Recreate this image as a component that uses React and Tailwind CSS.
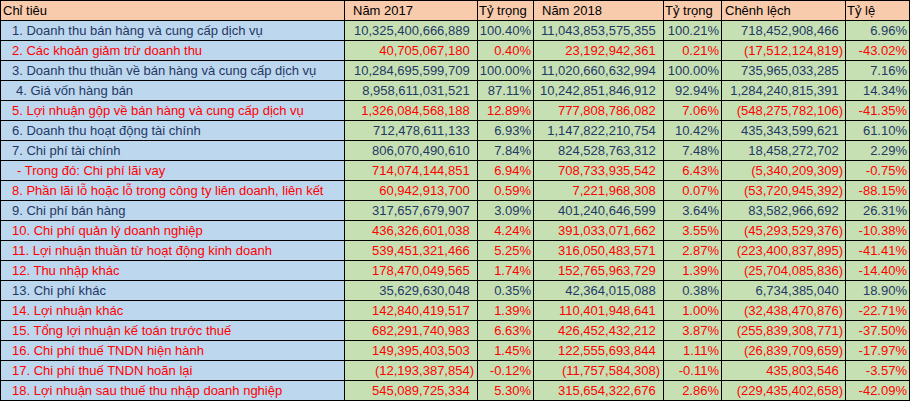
const rows = [
  { label: "1. Doanh thu bán hàng và cung cấp dịch vụ", indent: "pl-[11px]", red: false, v: ["10,325,400,666,889", "100.40%", "11,043,853,575,355", "100.21%", "718,452,908,466", "6.96%"] },
  { label: "2. Các khoản giảm trừ doanh thu", indent: "pl-[11px]", red: true, v: ["40,705,067,180", "0.40%", "23,192,942,361", "0.21%", "(17,512,124,819)", "-43.02%"] },
  { label: "3. Doanh thu thuần về bán hàng và cung cấp dịch vụ", indent: "pl-[11px]", red: false, v: ["10,284,695,599,709", "100.00%", "11,020,660,632,994", "100.00%", "735,965,033,285", "7.16%"] },
  { label: "4. Giá vốn hàng bán", indent: "pl-[15px]", red: false, v: ["8,958,611,031,521", "87.11%", "10,242,851,846,912", "92.94%", "1,284,240,815,391", "14.34%"] },
  { label: "5. Lợi nhuận gộp về bán hàng và cung cấp dịch vụ", indent: "pl-[11px]", red: true, v: ["1,326,084,568,188", "12.89%", "777,808,786,082", "7.06%", "(548,275,782,106)", "-41.35%"] },
  { label: "6. Doanh thu hoạt động tài chính", indent: "pl-[11px]", red: false, v: ["712,478,611,133", "6.93%", "1,147,822,210,754", "10.42%", "435,343,599,621", "61.10%"] },
  { label: "7. Chi phí tài chính", indent: "pl-[11px]", red: false, v: ["806,070,490,610", "7.84%", "824,528,763,312", "7.48%", "18,458,272,702", "2.29%"] },
  { label: "- Trong đó: Chi phí lãi vay", indent: "pl-[16px]", red: true, v: ["714,074,144,851", "6.94%", "708,733,935,542", "6.43%", "(5,340,209,309)", "-0.75%"] },
  { label: "8. Phần lãi lỗ hoặc lỗ trong công ty liên doanh, liên kết", indent: "pl-[11px]", red: true, v: ["60,942,913,700", "0.59%", "7,221,968,308", "0.07%", "(53,720,945,392)", "-88.15%"] },
  { label: "9. Chi phí bán hàng", indent: "pl-[11px]", red: false, v: ["317,657,679,907", "3.09%", "401,240,646,599", "3.64%", "83,582,966,692", "26.31%"] },
  { label: "10. Chi phí quản lý doanh nghiệp", indent: "pl-[11px]", red: true, v: ["436,326,601,038", "4.24%", "391,033,071,662", "3.55%", "(45,293,529,376)", "-10.38%"] },
  { label: "11. Lợi nhuận thuần từ hoạt động kinh doanh", indent: "pl-[11px]", red: true, v: ["539,451,321,466", "5.25%", "316,050,483,571", "2.87%", "(223,400,837,895)", "-41.41%"] },
  { label: "12. Thu nhập khác", indent: "pl-[11px]", red: true, v: ["178,470,049,565", "1.74%", "152,765,963,729", "1.39%", "(25,704,085,836)", "-14.40%"] },
  { label: "13. Chi phí khác", indent: "pl-[11px]", red: false, v: ["35,629,630,048", "0.35%", "42,364,015,088", "0.38%", "6,734,385,040", "18.90%"] },
  { label: "14. Lợi nhuận khác", indent: "pl-[11px]", red: true, v: ["142,840,419,517", "1.39%", "110,401,948,641", "1.00%", "(32,438,470,876)", "-22.71%"] },
  { label: "15. Tổng lợi nhuận kế toán trước thuế", indent: "pl-[11px]", red: true, v: ["682,291,740,983", "6.63%", "426,452,432,212", "3.87%", "(255,839,308,771)", "-37.50%"] },
  { label: "16. Chi phí thuế TNDN hiện hành", indent: "pl-[11px]", red: true, v: ["149,395,403,503", "1.45%", "122,555,693,844", "1.11%", "(26,839,709,659)", "-17.97%"] },
  { label: "17. Chi phí thuế TNDN hoãn lại", indent: "pl-[11px]", red: true, v: ["(12,193,387,854)", "-0.12%", "(11,757,584,308)", "-0.11%", "435,803,546", "-3.57%"] },
  { label: "18. Lợi nhuận sau thuế thu nhập doanh nghiệp", indent: "pl-[11px]", red: true, v: ["545,089,725,334", "5.30%", "315,654,322,676", "2.86%", "(229,435,402,658)", "-42.09%"] },
];

// accounting style: positives leave room for the closing paren
const Amount = ({ value }) => {
  const neg = value.startsWith("(");
  return (
    <>
      {value}
      {!neg && <span className="invisible">)</span>}
    </>
  );
};

export default function App() {
  return (
    <div className="w-[910px] h-[402px] bg-white font-['Liberation_Sans',Arial,sans-serif] text-[13px] leading-[19px]">
      <div className="grid grid-cols-[343px_132px_55px_129px_57px_123px_63px] auto-rows-[19px] gap-px p-px bg-black w-[910px]">
        <div className="bg-[#f8cbad] text-black pl-[2px] whitespace-nowrap">Chỉ tiêu</div>
        <div className="bg-[#f8cbad] text-black pl-[8px] whitespace-nowrap">Năm 2017</div>
        <div className="bg-[#f8cbad] text-black pl-px whitespace-nowrap">Tỷ trọng</div>
        <div className="bg-[#f8cbad] text-black pl-[8px] whitespace-nowrap">Năm 2018</div>
        <div className="bg-[#f8cbad] text-black pl-px whitespace-nowrap">Tỷ trọng</div>
        <div className="bg-[#f8cbad] text-black pl-[3px] whitespace-nowrap">Chênh lệch</div>
        <div className="bg-[#f8cbad] text-black pl-px whitespace-nowrap">Tỷ lệ</div>

        {rows.map((r, i) => {
          const color = r.red ? "text-[#ff0000]" : "text-[#1f3864]";
          return [
            <div key={i + "l"} className={`bg-[#bdd7ee] ${color} ${r.indent} whitespace-nowrap overflow-hidden`}>
              {r.label}
            </div>,
            <div key={i + "a"} className={`bg-[#c6e0b4] ${color} text-right pr-[3px] whitespace-nowrap`}>
              <Amount value={r.v[0]} />
            </div>,
            <div key={i + "b"} className={`bg-[#c6e0b4] ${color} text-right pr-[2px] whitespace-nowrap`}>
              {r.v[1]}
            </div>,
            <div key={i + "c"} className={`bg-[#c6e0b4] ${color} text-right pr-[3px] whitespace-nowrap`}>
              <Amount value={r.v[2]} />
            </div>,
            <div key={i + "d"} className={`bg-[#c6e0b4] ${color} text-right pr-[2px] whitespace-nowrap`}>
              {r.v[3]}
            </div>,
            <div key={i + "e"} className={`bg-[#c6e0b4] ${color} text-right pr-[2px] whitespace-nowrap`}>
              <Amount value={r.v[4]} />
            </div>,
            <div key={i + "f"} className={`bg-[#c6e0b4] ${color} text-right pr-[2px] whitespace-nowrap`}>
              {r.v[5]}
            </div>,
          ];
        })}
      </div>
    </div>
  );
}
